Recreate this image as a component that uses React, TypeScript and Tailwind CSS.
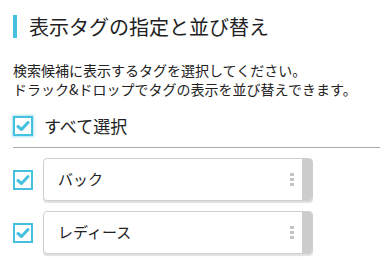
const FONT = "font-['Noto_Sans_CJK_JP','Noto_Sans',sans-serif]";

function Check({ glow = false }: { glow?: boolean }) {
  return (
    <span
      className={`flex h-[20px] w-[20px] shrink-0 items-center justify-center border-2 border-[#45c1df] bg-white ${
        glow ? "shadow-[0_0_2px_1px_rgba(69,193,223,0.45)]" : ""
      }`}
    >
      <svg width="14" height="12" viewBox="0 0 14 12" aria-hidden>
        <path
          d="M2 6.5 L5.5 9.5 L12 2.5"
          fill="none"
          stroke="#45c1df"
          strokeWidth="3"
          strokeLinecap="round"
          strokeLinejoin="round"
        />
      </svg>
    </span>
  );
}

function TagRow({ label }: { label: string }) {
  return (
    <div className="flex items-center gap-[10px]">
      <Check />
      <div className="flex h-[43px] w-[270px] overflow-hidden rounded-[4px] border border-[#cfcfcf] bg-white shadow-[0_2px_1px_rgba(0,0,0,0.12)]">
        <span className="flex flex-1 items-center pl-[14px] text-[15px] text-[#222]">{label}</span>
        <span className="flex flex-col justify-center gap-[2px] pr-[8px]">
          <span className="h-[3px] w-[4px] bg-[#c4c4c8]" />
          <span className="h-[3px] w-[4px] bg-[#c4c4c8]" />
          <span className="h-[3px] w-[4px] bg-[#c4c4c8]" />
        </span>
        <span className="w-[10px] bg-[#cccccc]" />
      </div>
    </div>
  );
}

export default function App() {
  return (
    <div className={`h-[274px] w-[380px] overflow-hidden bg-white pl-[13px] text-[#222] ${FONT}`}>
      <div className="mt-[15px] flex h-[23px] items-center border-l-4 border-[#45c1df] pl-[12px] text-[20px] leading-[23px]">
        表示タグの指定と並び替え
      </div>
      <p className="mt-[23px] text-[14px] leading-[19px]">
        検索候補に表示するタグを選択してください。
        <br />
        ドラック&amp;ドロップでタグの表示を並び替えできます。
      </p>
      <label className="mt-[16px] flex items-center gap-[11px] text-[17px] leading-[22px]">
        <Check glow />
        すべて選択
      </label>
      <div className="mt-[10px] border-t border-[#aaaaaa]" />
      <div className="mt-[10px] flex flex-col gap-[10px]">
        <TagRow label="バック" />
        <TagRow label="レディース" />
      </div>
    </div>
  );
}
